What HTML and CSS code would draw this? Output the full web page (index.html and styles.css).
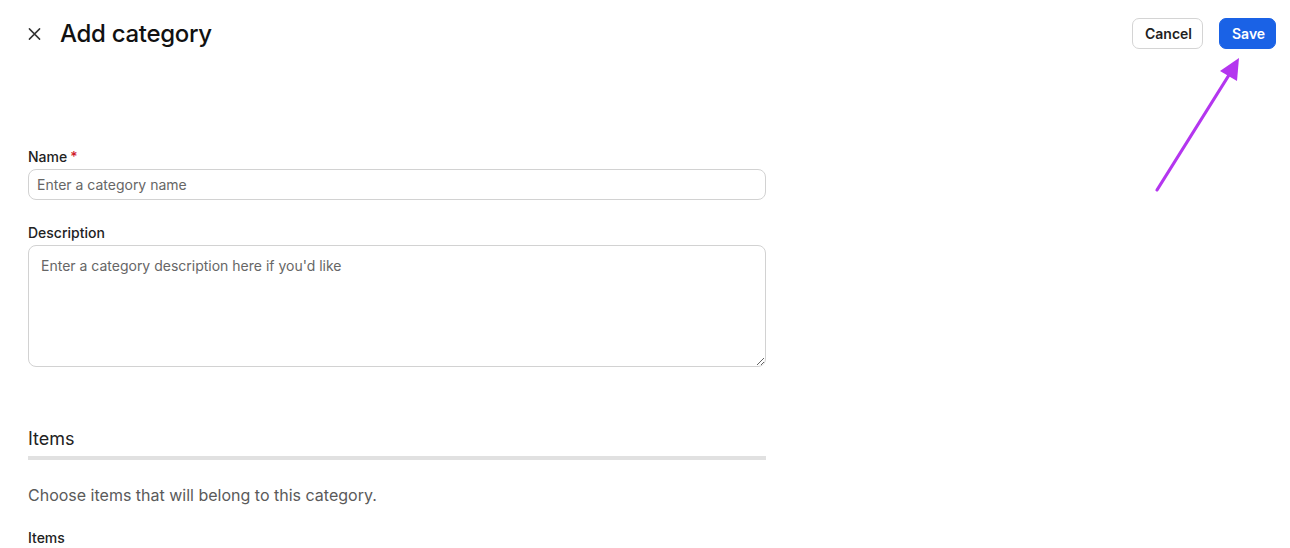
FILE: index.html
```html
<!DOCTYPE html>
<html lang="en">
<head>
<meta charset="utf-8">
<title>Add category</title>
<link rel="stylesheet" href="styles.css">
</head>
<body>
<header class="topbar">
  <div class="title-group">
    <button class="close-btn" aria-label="Close">
      <svg width="14" height="14" viewBox="0 0 14 14"><path d="M1.5 1.5 L12.5 12.5 M12.5 1.5 L1.5 12.5" stroke="#333" stroke-width="1.6" stroke-linecap="round" fill="none"/></svg>
    </button>
    <h1 class="title">Add category</h1>
  </div>
  <div class="actions">
    <button class="btn btn-secondary">Cancel</button>
    <button class="btn btn-primary">Save</button>
  </div>
  <svg class="arrow" width="100" height="150" viewBox="0 0 100 150">
    <line x1="12" y1="137" x2="84" y2="22" stroke="#b436ef" stroke-width="3.2" stroke-linecap="round"/>
    <polygon points="94,5 75,18 92,28" fill="#b436ef"/>
  </svg>
</header>
<main class="form">
  <div class="field">
    <label class="label">Name<span class="req">*</span></label>
    <input class="input" type="text" placeholder="Enter a category name">
  </div>
  <div class="field">
    <label class="label">Description</label>
    <textarea class="textarea" placeholder="Enter a category description here if you'd like"></textarea>
  </div>
  <section class="section">
    <h2 class="section-title">Items</h2>
    <div class="divider"></div>
    <p class="section-desc">Choose items that will belong to this category.</p>
    <div class="label">Items</div>
  </section>
</main>
</body>
</html>
```
FILE: styles.css
```css
* { box-sizing: border-box; }
html, body { margin: 0; padding: 0; background: #fff; }
body {
  font-family: Inter, "Noto Sans", sans-serif;
  color: #1a1a1a;
  width: 1290px;
  height: 548px;
  overflow: hidden;
}
.topbar {
  position: relative;
  display: flex;
  justify-content: space-between;
  align-items: center;
  padding: 18px 14px 0 28px;
  height: 49px;
}
.title-group { display: flex; align-items: center; gap: 19px; }
.close-btn {
  width: 13px; height: 14px; padding: 0; border: 0; background: none;
  display: flex; align-items: center; justify-content: center;
}
.title {
  margin: 0;
  font-size: 24px;
  font-weight: 500;
  letter-spacing: -0.3px;
  color: #111;
  line-height: 32px;
}
.actions { display: flex; gap: 16px; }
.btn {
  height: 31px;
  border-radius: 7px;
  font-family: Inter, sans-serif;
  font-size: 14px;
  font-weight: 600;
  padding: 0 12px;
}
.btn-secondary { background: #fff; border: 1px solid #d4d4d4; color: #1f1f1f; width: 71px; }
.btn-primary { background: #1a62e6; border: 1px solid #1a62e6; color: #fff; width: 57px; }
.arrow { position: absolute; left: 1145px; top: 53px; }
.form { width: 766px; padding: 99px 0 0 28px; }
.field { display: flex; flex-direction: column; gap: 3px; margin-bottom: 24px; }
.label { font-size: 14px; font-weight: 500; color: #222; line-height: 18px; }
.req { color: #d11a2a; margin-left: 3px; }
.input {
  height: 31px;
  border: 1px solid #d2d2d2;
  border-radius: 8px;
  padding: 0 8px;
  font-family: Inter, sans-serif;
  font-size: 14px;
  color: #222;
}
.input::placeholder, .textarea::placeholder { color: #666; }
.textarea {
  height: 122px;
  border: 1px solid #d2d2d2;
  border-radius: 8px;
  padding: 11px 12px;
  font-family: Inter, sans-serif;
  font-size: 14px;
  line-height: 18px;
  resize: vertical;
}
.section { margin-top: 59px; }
.section-title { margin: 0; font-size: 18px; font-weight: 400; color: #222; line-height: 26px; }
.divider { height: 4px; background: #e1e1e1; margin-top: 4px; }
.section-desc { margin: 24px 0 0; font-size: 16px; color: #5a5a5a; line-height: 22px; }
.section .label { margin-top: 23px; }
```
